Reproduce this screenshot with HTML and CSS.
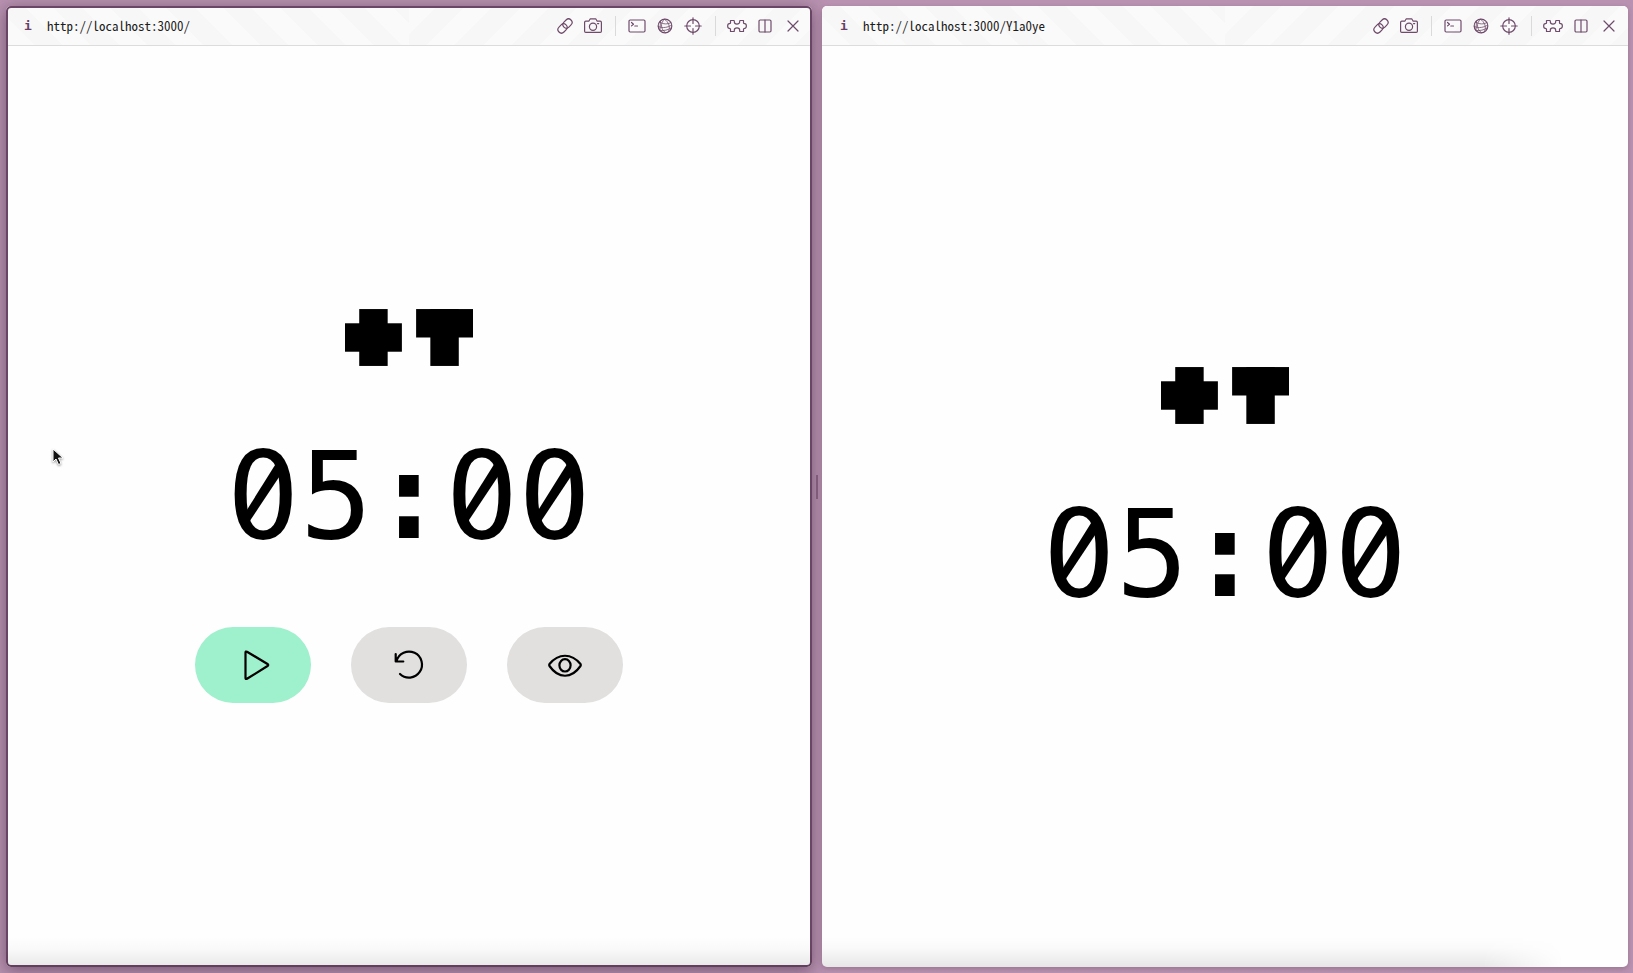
FILE: index.html
```html
<!DOCTYPE html>
<html lang="en">
<head>
<meta charset="utf-8">
<title>Timer</title>
<link rel="stylesheet" href="styles.css">
</head>
<body>
<svg class="defs" aria-hidden="true">
  <symbol id="link" viewBox="0 0 20 20"><g transform="rotate(-45 10 10)"><rect x="1.500" y="6.500" width="10" height="7" rx="3.500"/><rect x="8.500" y="6.500" width="10" height="7" rx="3.500"/></g></symbol>
  <symbol id="camera" viewBox="0 0 20 20"><path d="M2.800 5.200h3L7.300 2.800h5.400l1.500 2.400h3q1.200 0 1.200 1.200v8.800q0 1.200-1.200 1.200H2.800q-1.200 0-1.200-1.200V6.400q0-1.200 1.200-1.200z"/><circle cx="10" cy="10.800" r="3.600"/><path d="M14.500 7.600h1.200"/></symbol>
  <symbol id="terminal" viewBox="0 0 20 20"><rect x="2" y="4" width="16" height="12" rx="1.200"/><path d="M4.500 6.500l2 1.700-2 1.700M7.800 10h2.700"/></symbol>
  <symbol id="globe" viewBox="0 0 20 20"><circle cx="10" cy="10" r="6.800"/><path stroke-width=".8" d="M9.500 3.200c-4.500 4-4 10 1 13.600M9.500 3.200c4.500 3 6 8 4 12.200M4.500 6c4 2.500 8 2.500 11.500.500M3.200 10.500c5 2 9.500 1 13.500-1.500M5 14.500c4 .500 8-.500 11-2.500M5.500 5l-.5 9"/></symbol>
  <symbol id="target" viewBox="0 0 20 20"><circle cx="10" cy="10" r="6.300"/><path d="M10 1.800v5.700M10 12.500v5.700M1.800 10h5.700M12.500 10h5.700"/></symbol>
  <symbol id="puzzle" viewBox="0 0 20 20"><path d="M3.500 4.500h3.200c.8 0 .6.700.6 1.300 0 3 5.400 3 5.400 0 0-.6-.2-1.300.6-1.300h3.200v2.200c0 .9.700.9 1.200.9 2.200 0 2.200 4.800 0 4.800-.5 0-1.200 0-1.200.9v2.200h-3.200c-.8 0-.6-.7-.6-1.300 0-3-5.400-3-5.400 0 0 .6.200 1.300-.6 1.300H3.500v-2.200c0-.9-.7-.9-1.200-.9-2.200 0-2.200-4.800 0-4.800.5 0 1.200 0 1.200-.9z"/></symbol>
  <symbol id="columns" viewBox="0 0 20 20"><rect x="4" y="4" width="12" height="12" rx="1.200"/><path d="M10 4v12"/></symbol>
  <symbol id="close" viewBox="0 0 20 20"><path d="M5 5l10 10M15 5L5 15"/></symbol>
  <symbol id="logo" viewBox="0 0 9 4"><rect x="1" width="2" height="4"/><rect y="1" width="4" height="2"/><rect x="5" width="4" height="2"/><rect x="6" width="2" height="4"/></symbol>
</svg>

<main class="desk">
  <section class="pane pane-active" aria-label="Host">
    <header class="bar">
      <button class="info" aria-label="Page information">i</button>
      <input class="url" type="text" aria-label="Address" value="http://localhost:3000/" readonly>
      <nav class="tools" aria-label="Pane tools">
        <button class="tool" aria-label="Copy link"><svg><use href="#link"/></svg></button>
        <button class="tool" aria-label="Capture"><svg><use href="#camera"/></svg></button>
        <span class="sep"></span>
        <button class="tool" aria-label="Console"><svg><use href="#terminal"/></svg></button>
        <button class="tool" aria-label="Network"><svg><use href="#globe"/></svg></button>
        <button class="tool" aria-label="Inspect"><svg><use href="#target"/></svg></button>
        <span class="sep"></span>
        <button class="tool" aria-label="Extensions"><svg><use href="#puzzle"/></svg></button>
        <button class="tool" aria-label="Split"><svg><use href="#columns"/></svg></button>
        <button class="tool" aria-label="Close"><svg><use href="#close"/></svg></button>
      </nav>
    </header>
    <div class="page">
      <svg class="logo" role="img" aria-label="Plus timer"><use href="#logo"/></svg>
      <div class="clock"><span class="zero">0</span>5<span class="colon">:</span><span class="zero">0</span><span class="zero">0</span></div>
      <div class="controls">
        <button class="control control-play" aria-label="Play"><svg viewBox="0 0 40 40"><path d="M12.500 7.500q0-1.500 1.500-.8l20.500 12.300q1.500 1 0 2L14 33.800q-1.500.7-1.500-.8z"/></svg></button>
        <button class="control" aria-label="Reset"><svg viewBox="0 0 40 40"><path d="M6.700 9v7.500h7.600M7.500 16A13 13 0 1 1 11 29"/></svg></button>
        <button class="control" aria-label="Show"><svg viewBox="0 0 40 40"><path d="M4.500 21q-.7-1 0-2c9-11 22-11 31 0q.7 1 0 2c-9 13-22 13-31 0z"/><ellipse cx="20" cy="20.300" rx="5.600" ry="6.200"/></svg></button>
      </div>
    </div>
    <svg class="cursor" viewBox="0 0 14 20" aria-hidden="true"><path d="M2 2v13l3-3 2.500 5.500 2.500-1L7.500 11H12z"/></svg>
  </section>

  <div class="gutter"><span class="grip"></span></div>

  <section class="pane" aria-label="Guest">
    <header class="bar">
      <button class="info" aria-label="Page information">i</button>
      <input class="url" type="text" aria-label="Address" value="http://localhost:3000/Y1a0ye" readonly>
      <nav class="tools" aria-label="Pane tools">
        <button class="tool" aria-label="Copy link"><svg><use href="#link"/></svg></button>
        <button class="tool" aria-label="Capture"><svg><use href="#camera"/></svg></button>
        <span class="sep"></span>
        <button class="tool" aria-label="Console"><svg><use href="#terminal"/></svg></button>
        <button class="tool" aria-label="Network"><svg><use href="#globe"/></svg></button>
        <button class="tool" aria-label="Inspect"><svg><use href="#target"/></svg></button>
        <span class="sep"></span>
        <button class="tool" aria-label="Extensions"><svg><use href="#puzzle"/></svg></button>
        <button class="tool" aria-label="Split"><svg><use href="#columns"/></svg></button>
        <button class="tool" aria-label="Close"><svg><use href="#close"/></svg></button>
      </nav>
    </header>
    <div class="page page-faded">
      <svg class="logo" role="img" aria-label="Plus timer"><use href="#logo"/></svg>
      <div class="clock"><span class="zero">0</span>5<span class="colon">:</span><span class="zero">0</span><span class="zero">0</span></div>
    </div>
  </section>
</main>
</body>
</html>
```
FILE: styles.css
```css
* {
  box-sizing: border-box;
}

body {
  margin: 0;
  background: #b892b0;
}

button,
input {
  margin: 0;
  padding: 0;
  border: 0;
  background: none;
  font: inherit;
}

.defs {
  position: absolute;
  width: 0;
  height: 0;
}

.desk {
  display: grid;
  grid-template-columns: 1fr 10px 1fr;
  min-height: 100vh;
  padding: 6px 5px 6px 6px;
  overflow: hidden;
}

.pane {
  position: relative;
  display: flex;
  flex-direction: column;
  overflow: hidden;
  border-radius: 5px;
  background: #fefefe;
  box-shadow: 0 2px 5px rgba(70, 40, 65, 0.25);
}

.pane-active {
  outline: 2px solid #6b4565;
  outline-offset: -2px;
  box-shadow: 0 3px 16px rgba(60, 35, 60, 0.55);
}

.bar {
  display: flex;
  align-items: center;
  height: 40px;
  padding: 0 9px 0 15px;
  border-bottom: 1px solid #dcdcdc;
  background:
    repeating-linear-gradient(45deg, #fafafa 0 20px, #f7f7f7 20px 40px) left / 50% 100% no-repeat,
    repeating-linear-gradient(135deg, #fafafa 0 20px, #f7f7f7 20px 40px) right / 50% 100% no-repeat;
}

.info {
  width: 14px;
  color: #6b3f65;
  font-family: "DejaVu Sans Mono", monospace;
  font-size: 13px;
  font-weight: 700;
}

.url {
  flex: 1;
  min-width: 0;
  margin-left: 12px;
  color: #1c1c1c;
  font-family: "Noto Sans Mono CJK SC", "DejaVu Sans Mono", monospace;
  font-size: 13px;
}

.tools {
  display: flex;
  align-items: center;
  gap: 8px;
}

.tool {
  width: 20px;
  height: 20px;
}

.tool svg {
  display: block;
  width: 20px;
  height: 20px;
  fill: none;
  stroke: #6f4a6a;
  stroke-width: 1.2;
  stroke-linecap: round;
  stroke-linejoin: round;
}

.sep {
  width: 1px;
  height: 20px;
  margin: 0 3px 0 4px;
  background: #dadada;
}

.page {
  position: relative;
  flex: 1;
  display: flex;
  flex-direction: column;
  align-items: center;
  justify-content: center;
  gap: 40px;
  padding-bottom: 2px;
}

.page::after {
  content: "";
  position: absolute;
  inset: auto 0 0;
  height: 30px;
  background: linear-gradient(rgba(0, 0, 0, 0), rgba(0, 0, 0, 0.02) 40%, rgba(0, 0, 0, 0.09));
}

.page-faded::after {
  mask-image: linear-gradient(to right, #000 82%, transparent 92%);
}

.logo {
  width: 128px;
  height: 57px;
}

.clock {
  font-family: "DejaVu Sans Mono", monospace;
  font-size: 121px;
  line-height: 181px;
  color: #000;
}

.colon {
  font-weight: 700;
}

.zero {
  position: relative;
}

/* Swap the dot inside the zero for a full diagonal slash. */
.zero::before,
.zero::after {
  content: "";
  position: absolute;
  top: 50%;
}

.zero::before {
  left: 26px;
  width: 20px;
  height: 32px;
  margin-top: -19px;
  background: #fefefe;
}

.zero::after {
  left: 18px;
  width: 38px;
  height: 63px;
  margin-top: -35px;
  background: #000;
  clip-path: polygon(84% 2%, 95% 21%, 10% 98%, 3% 80%);
}

.controls {
  display: flex;
  gap: 40px;
}

.control {
  display: grid;
  place-items: center;
  width: 116px;
  height: 76px;
  border-radius: 38px;
  background: #e1e0df;
}

.control-play {
  background: #9ff0cc;
}

.control svg {
  width: 40px;
  height: 40px;
  fill: none;
  stroke: #000;
  stroke-width: 2.2;
  stroke-linecap: round;
  stroke-linejoin: round;
}

.cursor {
  position: absolute;
  left: 45px;
  top: 441px;
  width: 14px;
  height: 20px;
  fill: #111;
  stroke: #fff;
  stroke-width: 1;
  filter: drop-shadow(0 1px 1px rgba(0, 0, 0, 0.4));
}

.gutter {
  display: grid;
  place-items: center;
}

.grip {
  width: 2px;
  height: 24px;
  background: #8c6585;
}
```
